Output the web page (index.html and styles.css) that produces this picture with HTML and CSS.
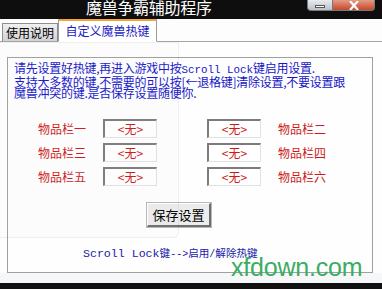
FILE: index.html
```html
<!DOCTYPE html>
<html lang="zh-CN">
<head>
<meta charset="utf-8">
<title>魔兽争霸辅助程序</title>
<link rel="stylesheet" href="styles.css">
</head>
<body>
<div class="window">
  <div class="titlebar">
    <div class="title">魔兽争霸辅助程序</div>
    <div class="winbtns">
      <div class="wbtn min"><span class="dash"></span></div>
      <div class="wbtn close"><svg width="12" height="9" viewBox="0 0 12 9"><path d="M2 0 L10 9 M10 0 L2 9" stroke="#fff" stroke-width="2.2"/></svg></div>
    </div>
  </div>
  <div class="tabs">
    <div class="tab">使用说明</div>
    <div class="tab active">自定义魔兽热键</div>
  </div>
  <div class="page">
    <div class="group">
      <p class="intro">请先设置好热键,再进入游戏中按<span class="lat">Scroll Lock</span>键启用设置.<br>支持大多数的键,不需要的可以按[←退格键]清除设置,不要设置跟<br>魔兽冲突的键.是否保存设置随便你.</p>
      <div class="slots">
        <div class="lbl">物品栏一</div><div class="key">&lt;无&gt;</div><div class="key r">&lt;无&gt;</div><div class="lbl">物品栏二</div>
        <div class="lbl">物品栏三</div><div class="key">&lt;无&gt;</div><div class="key r">&lt;无&gt;</div><div class="lbl">物品栏四</div>
        <div class="lbl">物品栏五</div><div class="key">&lt;无&gt;</div><div class="key r">&lt;无&gt;</div><div class="lbl">物品栏六</div>
      </div>
      <div class="btnrow"><div class="savebtn">保存设置</div></div>
      <p class="hint"><span class="lat">Scroll Lock</span>键<span class="sym">--&gt;</span>启用<span class="sym">/</span>解除热键</p>
      <div class="watermark">xfdown.com</div>
    </div>
  </div>
  <div class="statusgap"></div>
  <div class="bottombar"></div>
  <div class="ghost"></div>
</div>
</body>
</html>
```
FILE: styles.css
```css
html, body {
  margin: 0;
  padding: 0;
}
body {
  width: 382px;
  height: 289px;
  overflow: hidden;
  background: #fdfdfd;
  font-family: "Noto Sans CJK SC", "DejaVu Sans", sans-serif;
  font-size: 12px;
}
.window {
  position: relative;
  width: 382px;
  height: 289px;
  display: flex;
  flex-direction: column;
}
.titlebar {
  height: 19px;
  background: #0e0e0e;
  display: flex;
  align-items: flex-start;
}
.title {
  margin-left: 86px;
  color: #fff;
  font-size: 16px;
  line-height: 14px;
  letter-spacing: -0.3px;
}
.winbtns {
  margin-left: auto;
  margin-right: 7px;
  display: flex;
}
.wbtn {
  height: 11px;
  border: 1px solid #7a7a7a;
  border-top: none;
  display: flex;
  align-items: center;
  justify-content: center;
  box-sizing: border-box;
}
.wbtn.min {
  width: 26px;
  background: linear-gradient(#e9ecef, #b9c0c8);
  border-radius: 0 0 0 4px;
}
.wbtn.min .dash {
  width: 10px;
  height: 3px;
  border: 1px solid #555;
  background: #fff;
  box-sizing: border-box;
  margin-top: 2px;
}
.wbtn.close {
  width: 42px;
  background: linear-gradient(#e49a86, #c6482c);
  border-left: none;
  border-radius: 0 0 4px 0;
}
.tabs {
  height: 22px;
  display: flex;
  align-items: flex-end;
  padding-left: 2px;
  border-bottom: 1px solid #a4a4a4;
  background: #fdfdfd;
}
.tab {
  height: 19px;
  box-sizing: border-box;
  width: 56px;
  border: 1px solid #8e8e8e;
  background: linear-gradient(#f0f0f0, #d2d2d6);
  color: #000;
  line-height: 18px;
  text-align: center;
  font-size: 12px;
  margin-bottom: -1px;
  border-bottom: 1px solid #a4a4a4;
}
.tab.active {
  width: 99px;
  height: 23px;
  border-color: #9a9a9a;
  border-top: 2px solid #f1a43a;
  border-bottom: 1px solid #fff;
  background: #fff;
  color: #1a1ac4;
  line-height: 20px;
}
.page {
  flex: 1;
  padding: 15px 9px 0 7px;
  background: #fefefe;
}
.group {
  position: relative;
  height: 216px;
  box-sizing: border-box;
  border: 1px solid #a0a0a0;
  background: #fefefe;
}
.intro {
  margin: 4px 0 0 6px;
  color: #1515c8;
  font-size: 12px;
  line-height: 11px;
  white-space: nowrap;
  letter-spacing: -0.25px;
}
.lat {
  font-family: "Liberation Mono", monospace;
  font-size: 10.8px;
  letter-spacing: 0;
}
.slots {
  margin: 21px 0 0 30px;
  display: grid;
  grid-template-columns: 48px 54px 87px 48px;
  grid-auto-rows: 19px;
  column-gap: 17px;
  row-gap: 5px;
}
.lbl {
  color: #d01818;
  font-size: 12px;
  line-height: 19px;
}
.key {
  width: 54px;
  height: 19px;
  box-sizing: border-box;
  border-top: 2px solid #7c7c7c;
  border-left: 2px solid #7c7c7c;
  border-right: 1px solid #e2e2e2;
  border-bottom: 1px solid #e2e2e2;
  background: #fff;
  color: #d01818;
  text-align: center;
  line-height: 15px;
  font-size: 12px;
}
.key.r {
  justify-self: end;
}
.btnrow {
  margin: 17px 0 0 139px;
  display: flex;
}
.savebtn {
  width: 64px;
  height: 24px;
  box-sizing: border-box;
  border-top: 1px solid #fff;
  border-left: 1px solid #fff;
  border-right: 2px solid #6e6e6e;
  border-bottom: 2px solid #6e6e6e;
  outline: 1px solid #b8b8b8;
  background: #ececec;
  color: #000;
  font-size: 13px;
  line-height: 21px;
  text-align: center;
}
.hint {
  margin: 20px 0 0 75px;
  color: #2020a8;
  font-size: 10.6px;
  line-height: 12px;
  white-space: nowrap;
}
.hint .lat {
  font-size: 11.6px;
}
.hint .sym {
  font-family: "Liberation Mono", monospace;
  font-size: 10px;
}
.watermark {
  position: absolute;
  left: 223px;
  top: 197px;
  color: #3aad62;
  font-family: "Liberation Sans", Arial, sans-serif;
  font-size: 25px;
  line-height: 25px;
  letter-spacing: -0.2px;
}
.statusgap {
  height: 10px;
  background: #f6f7f8;
}
.bottombar {
  height: 6px;
  background: #111;
}
.ghost {
  position: absolute;
  left: -12px;
  top: 42px;
  width: 189px;
  height: 194px;
  border: 1px solid rgba(0, 0, 0, 0.05);
  border-radius: 0 0 6px 0;
  background: rgba(200, 200, 220, 0.04);
  pointer-events: none;
}
```
